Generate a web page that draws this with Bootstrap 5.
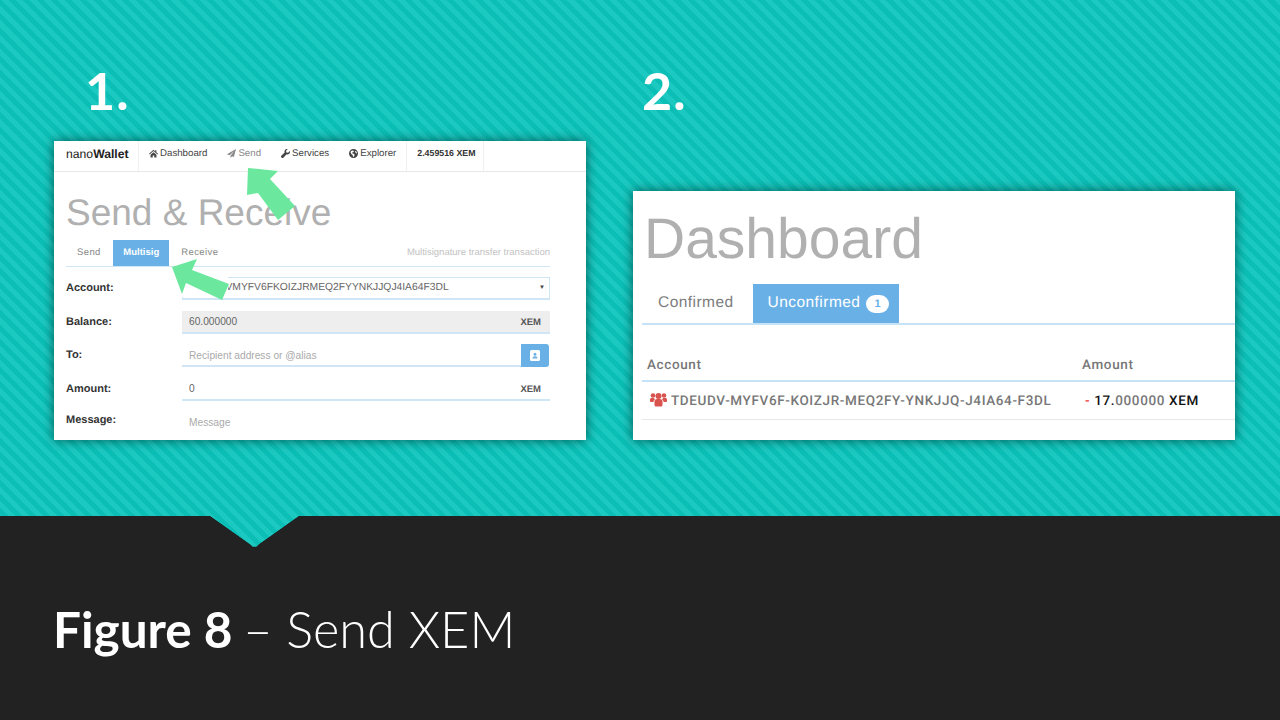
<!DOCTYPE html>
<html lang="en">
<head>
    <meta charset="UTF-8">
    <title>Figure 8 - Send XEM</title>
    <link href="https://cdn.jsdelivr.net/npm/bootstrap@5.3.0/dist/css/bootstrap.min.css" rel="stylesheet">
    <style>
        html, body { margin: 0; height: 720px; overflow: hidden; background: #222; }
        .striped {
            background-color: #14c4bc;
            background-image: repeating-linear-gradient(45deg, #1cc9c1 0, #1cc9c1 5px, #0bbfb6 5px, #0bbfb6 10px);
            background-attachment: fixed;
        }
        .hero { height: 516px; padding: 60px 45px 76px 54px; gap: 47px; }
        .shot-col-a { width: 532px; }
        .shot-col-b { width: 602px; }
        .step-no { font: 700 52px/1 Lato, sans-serif; color: #fff; letter-spacing: 1px; }
        .step-a { padding-left: 31px; padding-top: 4px; }
        .step-b { padding-left: 9px; padding-top: 4px; }
        .shot { background: #fff; box-shadow: 0 0 11px rgba(0, 50, 50, .75); overflow: hidden; font-family: "Liberation Sans", Arial, sans-serif; text-rendering: geometricPrecision; }
        .shot-a { height: 299px; }
        .shot-b { height: 249px; padding-left: 9px; }

        .wallet-bar { height: 31px; padding: 0; align-items: flex-start; border-bottom: 1px solid #e8e8e8; font-size: 9.7px; flex-wrap: nowrap; }
        .wallet-bar .navbar-brand { width: 85px; height: 30px; margin: 0; padding: 0 0 0 12px; font-size: 12.2px; line-height: 26px; color: #222; border-right: 1px solid #f0f0f0; }
        .wallet-bar .navbar-nav .nav-link { padding: 0 10px; line-height: 25px; color: #444; display: flex; align-items: center; gap: 2px; }
        .wallet-bar .navbar-nav .nav-link.is-hover { color: #888; }
        .wallet-bar .nav-link svg { width: 9px; height: 9px; fill: currentColor; }
        .bar-balance { width: 78px; height: 30px; padding-left: 10px; line-height: 25px; font-size: 8.8px; font-weight: 700; color: #333; border-left: 1px solid #f0f0f0; border-right: 1px solid #f0f0f0; white-space: nowrap; }

        .page-title-a { margin: 0; padding: 20px 0 0 12px; height: 68px; font-size: 37px; line-height: 42px; font-weight: 400; color: #b0b0b0; }
        .tabs-a { margin: 0 36px 0 12px; height: 27px; border-bottom: 1px solid #cfe6f7; font-size: 9.5px; }
        .tabs-a .tab-item { padding: 0 12px 0 12px; line-height: 25px; color: #888; letter-spacing: .4px; }
        .tabs-a .tab-item:first-child { padding: 0 12px 0 11px; }
        .tabs-a .tab-item.tab-on { background: #68b0e6; color: #fff; font-weight: 700; height: 26px; padding: 0 10px 0 10.500px; letter-spacing: 0; }
        .tabs-note { color: #c2c2c2; line-height: 25px; font-size: 9.5px; }

        .form-rows { margin: 10px 36px 0 12px; gap: 10.5px; }
        .form-line { height: 23px; }
        .form-line label { width: 116px; flex: none; margin: 0; font-size: 11px; font-weight: 700; line-height: 22px; color: #333; }
        .form-line:last-child label { line-height: 18px; }
        .form-line .input-group { flex: 1; height: 23px; flex-wrap: nowrap; }
        .form-line .form-control, .form-line .input-group-text {
            height: 23px; min-height: 0; padding: 1px 7px 0; font-size: 10.2px; line-height: 1; color: #666;
            background: transparent; border: 0; border-bottom: 2px solid #cfe6f7; border-radius: 0; box-shadow: none;
        }
        .form-line:last-child .form-control { height: 21px; }
        .form-line .form-control::placeholder { color: #aaa; opacity: 1; }
        .form-line .input-group-text { padding: 4px 9px 0 7px; font-size: 9.5px; font-weight: 700; color: #555; }
        .form-line .is-grey { background: #eee; }
        .select-box { flex: 1; height: 23px; padding: 0 4px 0 7px; border: 1px solid #cfe6f7; border-bottom-width: 2px; font-size: 10.3px; line-height: 20px; color: #666; white-space: nowrap; overflow: hidden; }
        .select-caret { font-size: 6px; color: #444; }
        .pick-btn { width: 28px; height: 23px; margin-right: 1px; padding: 0; border: 0; border-radius: 0 3px 3px 0; background: #68b0e6; }
        .pick-btn svg { width: 10px; height: 11px; display: block; margin: 0 auto; }
        .no-line { border-bottom: 0 !important; }

        .page-title-b { margin: 0; padding: 14px 0 0 2px; height: 93px; font-size: 57px; line-height: 68px; font-weight: 400; color: #b0b0b0; }
        .tabs-b { height: 41px; border-bottom: 2px solid #c6e2f7; font-size: 15.5px; letter-spacing: .45px; }
        .tabs-b .tab-item { padding: 0 19px 0 16px; line-height: 38px; color: #7c7c7c; white-space: nowrap; }
        .tabs-b .tab-item.tab-on { height: 39px; width: 146px; padding: 0 0 0 15px; background: #68b0e6; color: #fff; }
        .count-pill { display: inline-block; width: 23px; height: 18px; margin-left: 1px; border-radius: 9px; background: #fff; color: #68b0e6; font-size: 11px; font-weight: 700; line-height: 18px; text-align: center; vertical-align: 0; letter-spacing: 0; }

        .tx-table { margin: 24px 0 0; font-family: Roboto, sans-serif; font-size: 13.5px; letter-spacing: .63px; font-weight: 500; color: #777; }
        .tx-table th { padding: 2px 5px 0; height: 32px; vertical-align: middle; font-weight: 500; color: #777; border-bottom: 2px solid #c6e2f7; background: transparent; }
        .tx-table .th-account { width: 435px; }
        .tx-table td { padding: 1px 5px 0; height: 38px; vertical-align: middle; color: #777; border-bottom: 1px solid #e8e8e8; background: transparent; white-space: nowrap; }
        .users-icon { width: 17px; height: 15px; fill: #d9534f; margin: 0 4px 0 3px; vertical-align: -2px; }
        .amt-minus { margin: 0 0 0 3px; color: #e33; }
        .amt-strong { color: #111; }

        .notch { position: absolute; left: 209px; top: 515px; width: 91px; height: 33px; clip-path: polygon(0 0, 100% 0, 55% 29px, 52% 31.5px, 48% 31.5px, 45% 29px); }
        .arrows { position: absolute; left: 0; top: 0; width: 1280px; height: 516px; pointer-events: none; }

        .caption { height: 204px; padding: 83px 0 0 53px; background: #222; color: #fff; font: 300 50.5px/60px Lato, sans-serif; white-space: nowrap; }
        .caption b { font-weight: 700; font-size: 49.5px; margin-right: -3px; }
    </style>
</head>
<body>
    <div class="hero striped d-flex">
        <div class="shot-col-a d-flex flex-column justify-content-between">
            <div class="step-no step-a">1.</div>
            <div class="shot shot-a">
                <nav class="navbar navbar-expand wallet-bar justify-content-start">
                    <a class="navbar-brand" href="#">nano<b>Wallet</b></a>
                    <ul class="navbar-nav">
                        <li class="nav-item"><a class="nav-link" href="#">
                            <svg viewBox="0 0 16 16"><path d="M8 1.5 0 8.6l1 1.1L8 3.6l7 6.1 1-1.1-3-2.7V2h-2v2.3zM2.8 10.2V15h3.8v-3.6h2.8V15h3.8v-4.8L8 5.6z"/></svg>Dashboard</a></li>
                        <li class="nav-item"><a class="nav-link is-hover" href="#">
                            <svg viewBox="0 0 16 16"><path d="M16 0 0 9.2l4.4 1.8L13 3.4 6.2 11.8V16l2.6-3.2 3.4 1.4z"/></svg>Send</a></li>
                        <li class="nav-item"><a class="nav-link" href="#">
                            <svg viewBox="0 0 16 16"><path d="M15.7 3.7 12.6 6.8 9.6 6.2 9 3.2 12.1.2C10-.4 7.900.3 6.900 2 6.100 3.300 6 4.700 6.500 6L.6 11.900a2 2 0 0 0 0 2.800l.7.700a2 2 0 0 0 2.800 0L10 9.500c1.300.5 2.800.4 4-.4 1.700-1.100 2.400-3.300 1.700-5.400z"/></svg>Services</a></li>
                        <li class="nav-item"><a class="nav-link" href="#">
                            <svg viewBox="0 0 16 16"><path fill-rule="evenodd" d="M8 0a8 8 0 1 0 0 16A8 8 0 0 0 8 0zM3.500 3.500 7 2.500l2 1.200-1.500 2-2 .5.800 2 3 .8.500 2.500-1.500 2.500-1.300-.5-.5-3-2.500-1.500-1.200-3zM11 3l2.500 2 .8 3-1.800-.5-1.500-2z"/></svg>Explorer</a></li>
                    </ul>
                    <div class="bar-balance">2.459516 XEM</div>
                </nav>
                <h1 class="page-title-a">Send &amp; Receive</h1>
                <div class="tabs-a d-flex">
                    <div class="tab-item">Send</div>
                    <div class="tab-item tab-on">Multisig</div>
                    <div class="tab-item">Receive</div>
                    <div class="tabs-note ms-auto">Multisignature transfer transaction</div>
                </div>
                <div class="form-rows d-flex flex-column">
                    <div class="form-line d-flex">
                        <label>Account:</label>
                        <div class="select-box d-flex justify-content-between align-items-center">
                            <span>TDEUDVMYFV6FKOIZJRMEQ2FYYNKJJQJ4IA64F3DL</span><span class="select-caret">&#9660;</span>
                        </div>
                    </div>
                    <div class="form-line d-flex">
                        <label>Balance:</label>
                        <div class="input-group">
                            <input class="form-control is-grey" value="60.000000" readonly>
                            <span class="input-group-text is-grey">XEM</span>
                        </div>
                    </div>
                    <div class="form-line d-flex">
                        <label>To:</label>
                        <div class="input-group">
                            <input class="form-control" placeholder="Recipient address or @alias">
                            <button class="btn pick-btn" type="button" aria-label="Contacts">
                                <svg viewBox="0 0 10 11"><path fill="#fff" fill-rule="evenodd" d="M1.500 0h7A1.500 1.500 0 0 1 10 1.500v8A1.500 1.500 0 0 1 8.500 11h-7A1.500 1.500 0 0 1 0 9.500v-8A1.500 1.500 0 0 1 1.500 0zM5 2.800a1.500 1.500 0 1 0 0 3 1.500 1.500 0 0 0 0-3zM2.500 8.500h5c0-1.300-1-2.200-2.500-2.200S2.500 7.200 2.500 8.500z"/></svg>
                            </button>
                        </div>
                    </div>
                    <div class="form-line d-flex">
                        <label>Amount:</label>
                        <div class="input-group">
                            <input class="form-control" value="0">
                            <span class="input-group-text">XEM</span>
                        </div>
                    </div>
                    <div class="form-line d-flex">
                        <label>Message:</label>
                        <div class="input-group">
                            <input class="form-control no-line" placeholder="Message">
                        </div>
                    </div>
                </div>
            </div>
        </div>

        <div class="shot-col-b d-flex flex-column justify-content-between">
            <div class="step-no step-b">2.</div>
            <div class="shot shot-b">
                <h1 class="page-title-b">Dashboard</h1>
                <div class="tabs-b d-flex">
                    <div class="tab-item">Confirmed</div>
                    <div class="tab-item tab-on">Unconfirmed <span class="count-pill">1</span></div>
                </div>
                <table class="table tx-table">
                    <thead>
                        <tr><th class="th-account">Account</th><th>Amount</th></tr>
                    </thead>
                    <tbody>
                        <tr>
                            <td><svg class="users-icon" viewBox="0 0 17 15"><circle cx="8.500" cy="4" r="3"/><circle cx="3" cy="3.500" r="2.300"/><circle cx="14" cy="3.500" r="2.300"/><path d="M4.500 9.500c0-1.500 1.200-2.500 2.500-2.500h3c1.300 0 2.500 1 2.500 2.500V13c0 .8-.6 1.500-1.500 1.500H6c-.9 0-1.500-.7-1.500-1.500z"/><path d="M0 7.500C0 6.500.8 6 1.500 6H4c.3 1 .9 1.300 1 1.500-1 .5-1.500 1.300-1.500 2.500H1c-.6 0-1-.4-1-1zM17 7.500c0-1-.8-1.500-1.500-1.500H13c-.3 1-.9 1.300-1 1.500 1 .5 1.500 1.300 1.500 2.500H16c.6 0 1-.4 1-1z"/></svg>TDEUDV-MYFV6F-KOIZJR-MEQ2FY-YNKJJQ-J4IA64-F3DL</td>
                            <td><span class="amt-minus">-</span> <span class="amt-strong">17.</span>000000 <span class="amt-strong">XEM</span></td>
                        </tr>
                    </tbody>
                </table>
            </div>
        </div>

        <svg class="arrows" viewBox="0 0 1280 516">
            <rect fill="#fff" x="180" y="272" width="48" height="25"/>
            <polygon fill="#6ce89e" points="248,168 278,171 270,179 295,206 278,220 258,193 247,195"/>
            <polygon fill="#6ce89e" points="172,267 197,259 192,270 229,284 222,300 186,283 182,294"/>
        </svg>
    </div>
    <div class="notch striped"></div>
    <div class="caption"><b>Figure 8</b> – Send XEM</div>

    <script src="https://cdn.jsdelivr.net/npm/bootstrap@5.3.0/dist/js/bootstrap.bundle.min.js"></script>
</body>
</html>
